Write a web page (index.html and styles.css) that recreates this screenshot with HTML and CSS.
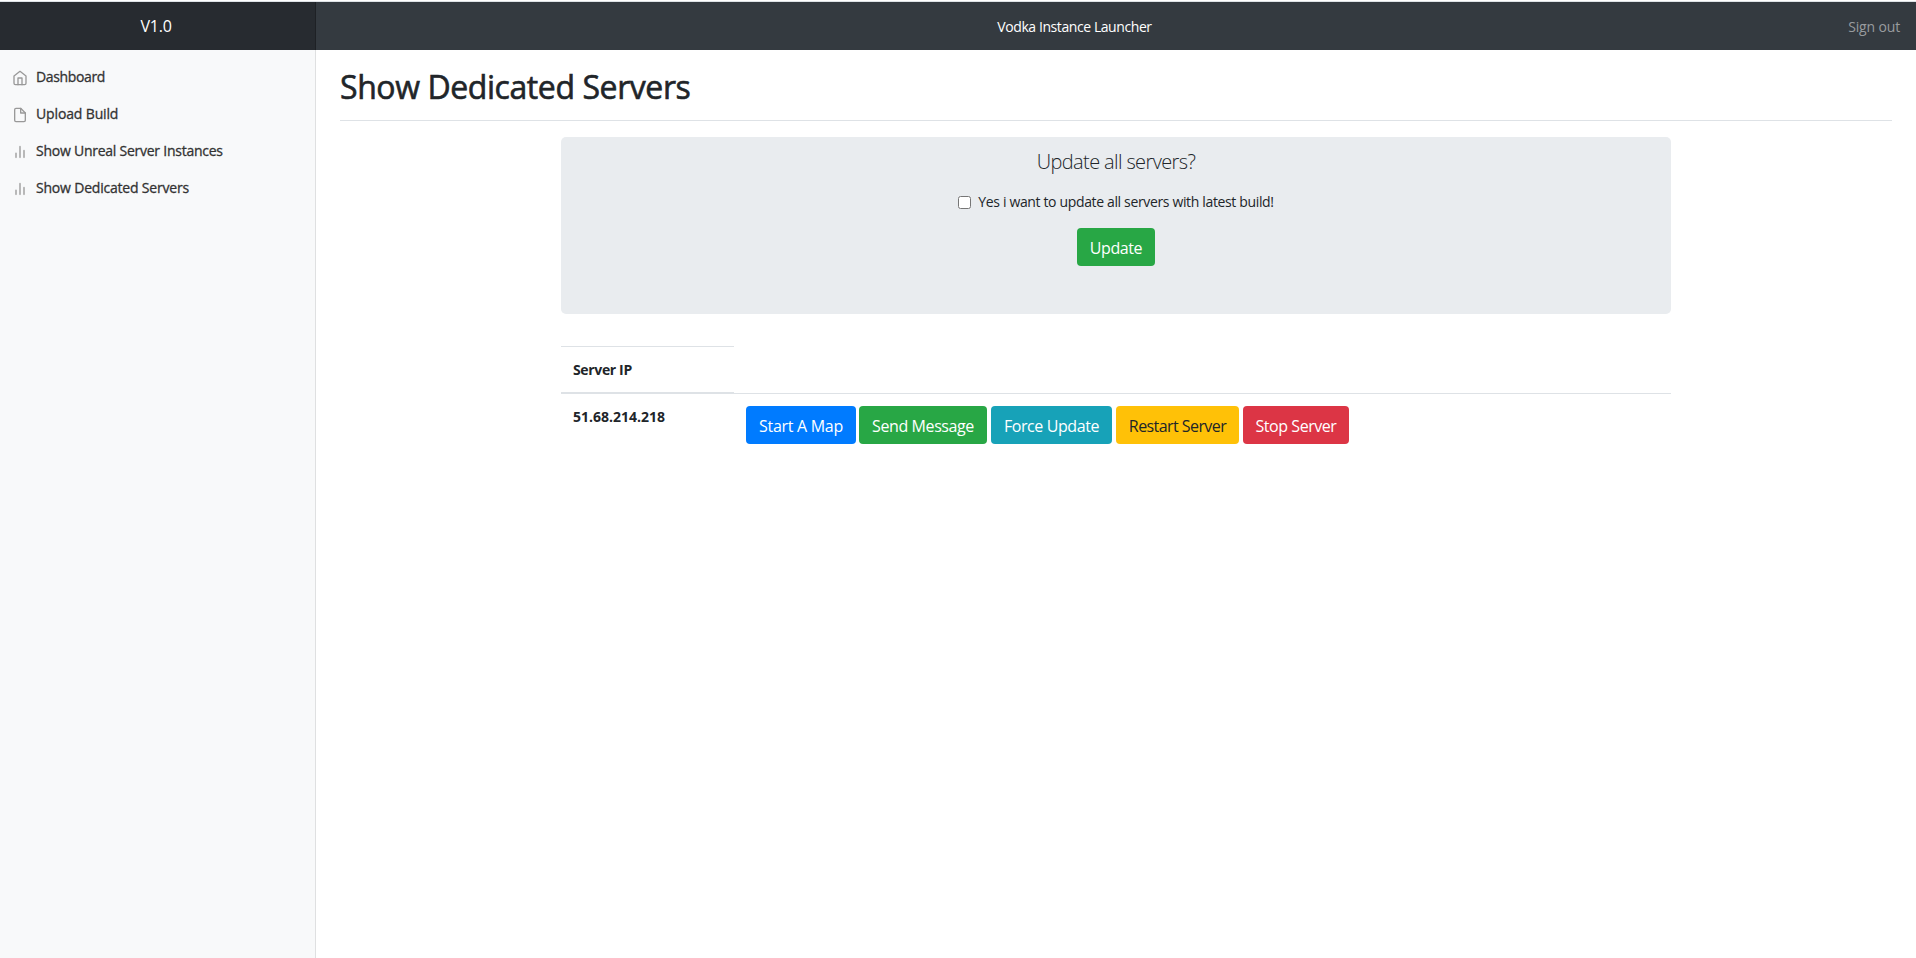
FILE: index.html
```html
<!DOCTYPE html>
<html lang="en">
<head>
<meta charset="utf-8">
<title>Vodka Instance Launcher</title>
<link rel="stylesheet" href="styles.css">
</head>
<body>
<nav class="navbar">
  <a class="brand"><span>V1.0</span></a>
  <span class="title">Vodka Instance Launcher</span>
  <a class="signout">Sign out</a>
</nav>
<div class="layout">
  <aside class="sidebar">
    <a class="nav-link"><svg class="icon" viewBox="0 0 24 24"><path d="M3 9l9-7 9 7v11a2 2 0 0 1-2 2H5a2 2 0 0 1-2-2z"/><path d="M9 22V12h6v10"/></svg><span class="t-dash">Dashboard</span></a>
    <a class="nav-link"><svg class="icon" viewBox="0 0 24 24"><path d="M13 2H6a2 2 0 0 0-2 2v16a2 2 0 0 0 2 2h12a2 2 0 0 0 2-2V9z"/><path d="M13 2v7h7"/></svg><span class="t-upload">Upload Build</span></a>
    <a class="nav-link"><svg class="icon icon-bars" viewBox="0 0 24 24"><path d="M18 20V10M12 20V4M6 20v-6"/></svg><span class="t-unreal">Show Unreal Server Instances</span></a>
    <a class="nav-link"><svg class="icon icon-bars" viewBox="0 0 24 24"><path d="M18 20V10M12 20V4M6 20v-6"/></svg><span class="t-dedicated">Show Dedicated Servers</span></a>
  </aside>
  <main class="main">
    <header class="page-head"><h1>Show Dedicated Servers</h1></header>
    <div class="container">
      <section class="jumbotron">
        <p class="question">Update all servers?</p>
        <label class="check"><input type="checkbox"><span>Yes i want to update all servers with latest build!</span></label>
        <button class="btn btn-update">Update</button>
      </section>
      <div class="table">
        <div class="cell head">Server IP</div>
        <div class="cell blank"></div>
        <div class="cell ip">51.68.214.218</div>
        <div class="cell actions">
          <button class="btn btn-start">Start A Map</button>
          <button class="btn btn-send">Send Message</button>
          <button class="btn btn-force">Force Update</button>
          <button class="btn btn-restart">Restart Server</button>
          <button class="btn btn-stop">Stop Server</button>
        </div>
      </div>
    </div>
  </main>
</div>
</body>
</html>
```
FILE: styles.css
```css
* { box-sizing: border-box; }
body {
  margin: 0;
  height: 958px;
  overflow: hidden;
  display: flex;
  flex-direction: column;
  border-top: 1px solid #fff;
  font-family: "Open Sans", "Noto Sans", sans-serif;
  font-size: 14px;
  line-height: 21px;
  color: #212529;
  background: #fff;
  white-space: nowrap;
}
.navbar {
  flex: none;
  height: 49px;
  display: flex;
  align-items: center;
  border-top: 1px solid #dee2e6;
  background: #343a40;
  color: #fff;
}
.brand {
  width: 316px;
  height: 48px;
  display: flex;
  align-items: center;
  justify-content: center;
  padding: 1px 4px 0 0;
  background: #272b30;
  box-shadow: inset -1px 0 0 #1e2125;
  font-size: 16px;
  letter-spacing: -0.2px;
}
.title { flex: 1; text-align: center; padding-left: 1px; letter-spacing: -0.42px; }
.signout { width: 84px; padding-right: 16px; text-align: right; color: #999c9f; letter-spacing: -0.15px; }
.layout { flex: 1; display: flex; }
.sidebar {
  width: 316px;
  padding-top: 8px;
  background: #f8f9fa;
  box-shadow: inset -1px 0 0 #dfe0e1;
}
.nav-link {
  display: flex;
  align-items: center;
  height: 37px;
  padding-left: 12px;
  gap: 8px;
  font-weight: 500;
  color: #333;
  -webkit-text-stroke: 0.3px #333;
}
.t-dash { letter-spacing: -0.36px; }
.t-upload { letter-spacing: -0.14px; }
.t-unreal { letter-spacing: -0.25px; }
.t-dedicated { letter-spacing: -0.2px; }
.icon {
  width: 16px;
  height: 16px;
  margin-top: 3px;
  fill: none;
  stroke: #999;
  stroke-width: 2;
  stroke-linecap: round;
  stroke-linejoin: round;
}
.icon-bars { stroke-width: 2.4; stroke: #a8a8a8; }
.main { flex: 1; padding: 16px 24px 0; }
.page-head { height: 55px; border-bottom: 1px solid #dee2e6; }
h1 {
  margin: 0;
  font-size: 32px;
  line-height: 42px;
  font-weight: 500;
  letter-spacing: -0.42px;
  -webkit-text-stroke: 0.6px #212529;
}
.container { width: 1110px; margin: 16px auto 0; }
.jumbotron {
  height: 177px;
  padding-top: 10px;
  display: flex;
  flex-direction: column;
  align-items: center;
  background: #e9ecef;
  border-radius: 5px;
}
.question { margin: 0; font-size: 20px; line-height: 30px; font-weight: 300; letter-spacing: -0.62px; }
.check { display: flex; align-items: center; height: 21px; margin-top: 15px; gap: 7px; letter-spacing: -0.35px; }
.check span { padding-bottom: 2px; }
.check input { width: 13px; height: 13px; margin: 0; }
.btn {
  height: 38px;
  padding: 1px 0 0;
  border: 0;
  border-radius: 4px;
  font: 400 16px/24px "Open Sans", "Noto Sans", sans-serif;
  letter-spacing: -0.4px;
  color: #fff;
}
.btn-update { width: 78px; margin-top: 15px; background: #28a745; }
.table { margin-top: 32px; display: grid; grid-template-columns: 173px 937px; }
.cell { padding: 12px; }
.head {
  height: 48px;
  border-top: 1px solid #dee2e6;
  border-bottom: 2px solid #dee2e6;
  font-weight: 700;
  letter-spacing: -0.35px;
}
.blank { border-bottom: 1px solid #dee2e6; }
.ip { font-weight: 700; }
.actions { display: flex; }
.btn-start { width: 110px; background: #007bff; margin-right: 3px; letter-spacing: -0.3px; }
.btn-send { width: 128px; background: #28a745; margin-right: 4px; }
.btn-force { width: 121px; background: #17a2b8; margin-right: 4px; }
.btn-restart { width: 123px; background: #ffc107; color: #212529; margin-right: 4px; letter-spacing: -0.57px; }
.btn-stop { width: 106px; background: #dc3545; letter-spacing: -0.45px; }
```
